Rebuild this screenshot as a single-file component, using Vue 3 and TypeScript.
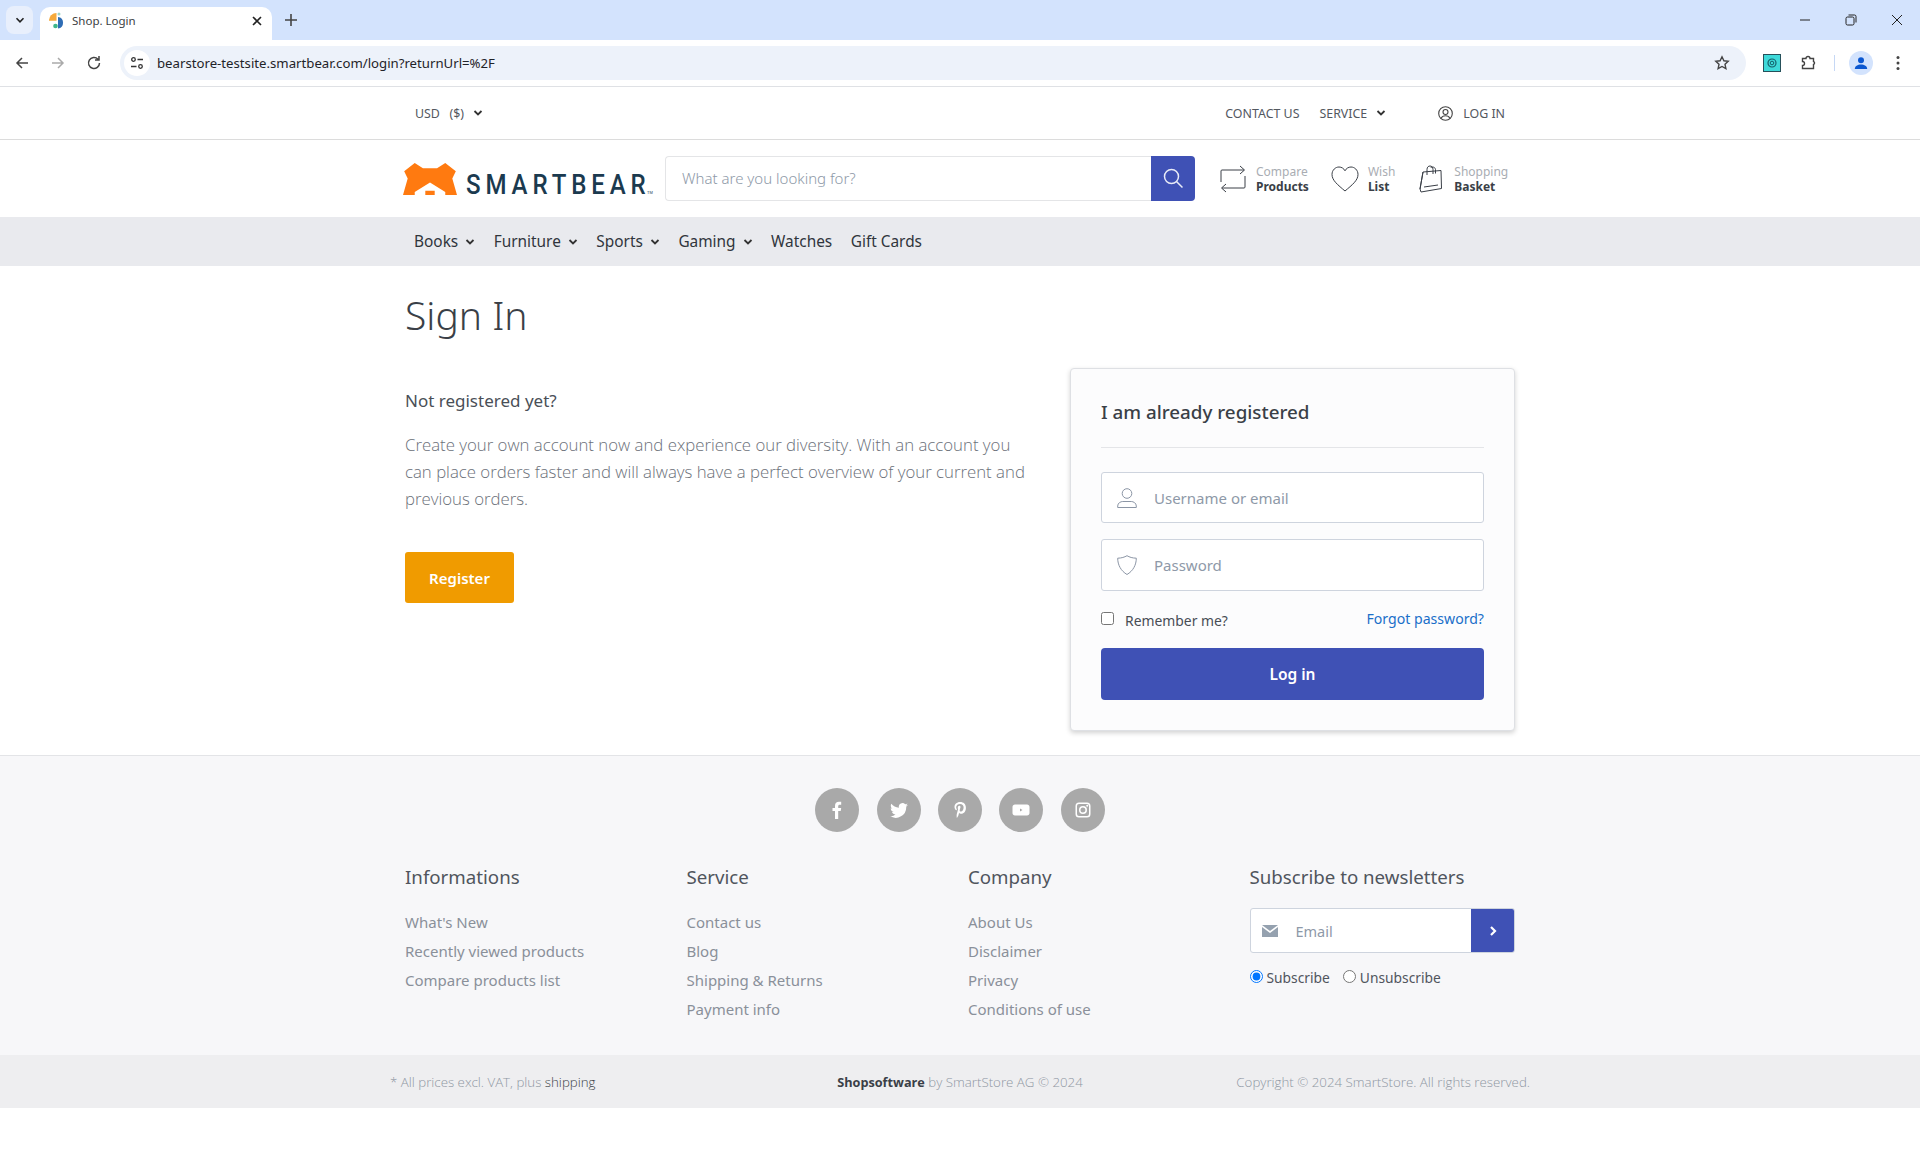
<template>
  <div class="page">
    <div class="tabstrip">
      <div class="tab-menu"><svg width="12" height="12" viewBox="0 0 12 12"><path d="M2.500 4.200 6 7.800l3.500-3.600" fill="none" stroke="#222" stroke-width="1.600"/></svg></div>
      <div class="tab">
        <svg class="favicon" width="16" height="17" viewBox="0 0 16 17">
          <path d="M7.500 1A7.500 7.500 0 0 0 0 8.800h7.500z" fill="#f6a93b"/>
          <path d="M9 5a5.800 5.800 0 0 1 0 11.500z" fill="#2f6db5"/>
          <circle cx="10" cy="2" r="1.500" fill="#9fd3c7"/>
          <circle cx="6.500" cy="14" r="2.300" fill="#3fb68b"/>
        </svg>
        <span class="tab-title">Shop. Login</span>
        <svg class="tab-x" width="12" height="12" viewBox="0 0 12 12"><path d="m2 2 8 8M10 2l-8 8" stroke="#222" stroke-width="1.600"/></svg>
      </div>
      <svg class="tab-plus" width="14" height="14" viewBox="0 0 14 14"><path d="M7 1v12M1 7h12" stroke="#444" stroke-width="1.600"/></svg>
      <div class="win-btns">
        <svg width="12" height="12" viewBox="0 0 12 12"><path d="M1 6h10" stroke="#222" stroke-width="1"/></svg>
        <svg width="12" height="12" viewBox="0 0 12 12"><rect x="1" y="3" width="8" height="8" rx="1.500" fill="none" stroke="#222"/><path d="M3.500 1h6A1.500 1.500 0 0 1 11 2.500v6" fill="none" stroke="#222"/></svg>
        <svg width="12" height="12" viewBox="0 0 12 12"><path d="m1 1 10 10M11 1 1 11" stroke="#222"/></svg>
      </div>
    </div>

    <div class="toolbar">
      <svg width="16" height="16" viewBox="0 0 16 16"><path d="M14 8H3M8 3 3 8l5 5" fill="none" stroke="#444" stroke-width="1.500"/></svg>
      <svg width="16" height="16" viewBox="0 0 16 16"><path d="M2 8h11M8 3l5 5-5 5" fill="none" stroke="#aaa" stroke-width="1.500"/></svg>
      <svg width="16" height="16" viewBox="0 0 16 16"><path d="M13.500 8A5.500 5.500 0 1 1 12 4.200M13 1v4H9" fill="none" stroke="#444" stroke-width="1.500"/></svg>
      <div class="omnibox">
        <span class="site-info">
          <svg width="14" height="14" viewBox="0 0 14 14"><circle cx="3.500" cy="3.500" r="1.800" fill="none" stroke="#333" stroke-width="1.300"/><path d="M7.500 3.500H13M1 10.500h5.500" stroke="#333" stroke-width="1.300"/><circle cx="10.500" cy="10.500" r="1.800" fill="none" stroke="#333" stroke-width="1.300"/></svg>
        </span>
        <span class="url">bearstore-testsite.smartbear.com/login?returnUrl=%2F</span>
        <svg class="star" width="16" height="16" viewBox="0 0 16 16"><path d="m8 1.800 1.900 4 4.300.5-3.200 3 .9 4.300L8 11.500l-3.900 2.100.9-4.300-3.200-3 4.300-.5z" fill="none" stroke="#444" stroke-width="1.400"/></svg>
      </div>
      <div class="ext-icon"><svg width="10" height="10" viewBox="0 0 10 10"><circle cx="5" cy="5" r="4" fill="none" stroke="#14606a" stroke-width="1.200"/><circle cx="5" cy="5" r="1.800" fill="none" stroke="#14606a"/></svg></div>
      <svg class="puzzle" width="16" height="16" viewBox="0 0 16 16"><path d="M1.500 3.500h3.500a2 2 0 0 1 4 0h3.500v3a1.600 1.600 0 0 1 0 3v4h-11V10.500a1.600 1.600 0 0 0 0-4z" fill="none" stroke="#444" stroke-width="1.400"/></svg>
      <span class="tb-sep"></span>
      <span class="avatar"><svg width="14" height="14" viewBox="0 0 14 14"><circle cx="7" cy="4.300" r="3" fill="#0b57d0"/><path d="M0.800 13c0-3 2.800-4.500 6.200-4.500s6.200 1.500 6.200 4.500z" fill="#0b57d0"/></svg></span>
      <svg class="dots" width="4" height="16" viewBox="0 0 4 16"><circle cx="2" cy="2.500" r="1.500" fill="#444"/><circle cx="2" cy="8" r="1.500" fill="#444"/><circle cx="2" cy="13.500" r="1.500" fill="#444"/></svg>
    </div>

    <div class="topbar">
      <div class="container topbar-in">
        <span class="top-link currency">USD&nbsp;&nbsp;&nbsp;($) <svg class="caret" width="10" height="10" viewBox="0 0 10 10"><path d="M1.500 3 5 6.500 8.500 3" fill="none" stroke="#333" stroke-width="1.800"/></svg></span>
        <div class="top-right">
          <span class="top-link">CONTACT US</span>
          <span class="top-link">SERVICE <svg class="caret" width="10" height="10" viewBox="0 0 10 10"><path d="M1.500 3 5 6.500 8.500 3" fill="none" stroke="#333" stroke-width="1.800"/></svg></span>
          <span class="top-link login">
            <svg width="15" height="15" viewBox="0 0 15 15"><circle cx="7.500" cy="7.500" r="6.800" fill="none" stroke="#444" stroke-width="1.100"/><circle cx="7.500" cy="6" r="2.500" fill="none" stroke="#444" stroke-width="1.100"/><path d="M3 12.500c.8-2 2.500-2.700 4.500-2.700s3.700.7 4.500 2.700" fill="none" stroke="#444" stroke-width="1.100"/></svg>
            LOG IN
          </span>
        </div>
      </div>
    </div>

    <header class="header">
      <div class="container header-in">
        <div class="logo">
          <svg width="54" height="32" viewBox="0 0 46 31" preserveAspectRatio="none">
            <path d="M1 8 10 0l7 5h12l7-5 9 8-3 7 4 16H0l4-16z" fill="#ff7a10"/>
            <path d="M10 31v-3l13-9 13 9v3h-9v-4h-8v4z" fill="#fff"/>
          </svg>
          <svg class="logo-word" width="192" height="28" viewBox="0 0 192 28" overflow="visible">
            <text x="0" y="27" transform="scale(.86 1)" textLength="209" lengthAdjust="spacing" class="logo-text">SMARTBEAR</text>
            <text x="181" y="27" class="logo-tm">TM</text>
          </svg>
        </div>
        <div class="search">
          <input class="search-input" placeholder="What are you looking for?" />
          <button class="search-btn" type="button">
            <svg width="22" height="22" viewBox="0 0 22 22"><circle cx="9.500" cy="9.500" r="7" fill="none" stroke="#e8ebf7" stroke-width="1.500"/><path d="m14.500 14.500 6 6" stroke="#e8ebf7" stroke-width="1.500"/></svg>
          </button>
        </div>
        <div class="tools">
          <div class="tool tool-compare">
            <svg width="26" height="28" viewBox="0 0 26 28"><path d="M13 5H2a1 1 0 0 0-1 1v11M20 1l4.500 4-4.500 4M13 5h11M13 23h11a1 1 0 0 0 1-1V11M6 19l-4.500 4L6 27M13 23H2" fill="none" stroke="#3a3f47" stroke-width="1"/></svg>
            <div class="tool-text"><span>Compare</span><b>Products</b></div>
          </div>
          <div class="tool tool-wish">
            <svg width="28" height="26" viewBox="0 0 28 26"><path d="M14 25C7 19 1 14.500 1 8.500 1 4 4.500 1 8 1c2.500 0 4.800 1.400 6 3.800C15.200 2.400 17.500 1 20 1c3.500 0 7 3 7 7.500 0 6-6 10.500-13 16.500z" fill="none" stroke="#3a3f47" stroke-width="1"/></svg>
            <div class="tool-text"><span>Wish</span><b>List</b></div>
          </div>
          <div class="tool tool-bag">
            <svg width="23" height="28" viewBox="0 0 23 28"><path d="M4 7 22 5.500l.500 18L2 27 1 24zM4 7l-3 17M8 10V4.500C8 2 9.500 1 11 1s3 1 3 3.500V9M11.500 3c1-1.500 4.500-1.500 5 1.500V8.500M5 22l14-2" fill="none" stroke="#3a3f47" stroke-width="1"/></svg>
            <div class="tool-text"><span>Shopping</span><b>Basket</b></div>
          </div>
        </div>
      </div>
    </header>

    <nav class="catnav">
      <div class="container catnav-in">
        <span v-for="item in navItems" :key="item.label" class="cat">
          {{ item.label }}
          <svg v-if="item.menu" class="caret" width="10" height="10" viewBox="0 0 10 10"><path d="M1.500 3 5 6.500 8.500 3" fill="none" stroke="#333" stroke-width="1.800"/></svg>
        </span>
      </div>
    </nav>

    <main class="main">
      <div class="container">
        <h1 class="title">Sign In</h1>
        <div class="signin-row">
          <section class="register">
            <h2 class="reg-head">Not registered yet?</h2>
            <p class="reg-text">Create your own account now and experience our diversity. With an account you can place orders faster and will always have a perfect overview of your current and previous orders.</p>
            <button class="reg-btn" type="button">Register</button>
          </section>
          <section class="card">
            <h2 class="card-title">I am already registered</h2>
            <div class="field">
              <svg width="20" height="20" viewBox="0 0 20 20"><circle cx="10" cy="5.500" r="4.800" fill="none" stroke="#8b95a5"/><path d="M.7 19.500v-1.500c0-3 3-4.500 5-4.500h8.600c2 0 5 1.500 5 4.500v1.500z" fill="none" stroke="#8b95a5"/></svg>
              <input placeholder="Username or email" />
            </div>
            <div class="field field-pass">
              <svg width="20" height="20" viewBox="0 0 20 20"><path d="M10 .7c2.500 1.500 5.500 2.400 9.300 2.500C19.300 10 16 16 10 19.500 4 16 .7 10 .7 3.200 4.500 3.100 7.500 2.200 10 .7z" fill="none" stroke="#8b95a5"/></svg>
              <input placeholder="Password" />
            </div>
            <div class="remember-row">
              <label class="remember"><input type="checkbox" /><span>Remember me?</span></label>
              <a class="forgot">Forgot password?</a>
            </div>
            <button class="login-btn" type="button">Log in</button>
          </section>
        </div>
      </div>
    </main>

    <footer class="footer">
      <div class="socials">
        <span v-for="s in socials" :key="s.name" class="social">
          <svg width="18" height="18" viewBox="0 0 18 18"><path :d="s.path" :fill-rule="s.rule" fill="#fff"/></svg>
        </span>
      </div>
      <div class="container footer-cols">
        <div v-for="col in columns" :key="col.title" class="fcol">
          <h3 class="fhead">{{ col.title }}</h3>
          <a v-for="l in col.links" :key="l" class="flink">{{ l }}</a>
        </div>
        <div class="fcol">
          <h3 class="fhead">Subscribe to newsletters</h3>
          <div class="news">
            <span class="news-ico"><svg width="16" height="12" viewBox="0 0 16 12"><path d="M0 0h16L8 6z" fill="#95a1af"/><path d="M0 2l8 6 8-6v10H0z" fill="#95a1af"/></svg></span>
            <input placeholder="Email" />
            <button type="button"><svg width="10" height="12" viewBox="0 0 10 12"><path d="m3 2 4 4-4 4" fill="none" stroke="#fff" stroke-width="2.200"/></svg></button>
          </div>
          <div class="radios">
            <label><input type="radio" name="nl" checked />Subscribe</label>
            <label><input type="radio" name="nl" />Unsubscribe</label>
          </div>
        </div>
      </div>
      <div class="legal">
        <div class="legal-in">
          <span>* All prices excl. VAT, plus <a>shipping</a></span>
          <span class="legal-mid"><b>Shopsoftware</b> by SmartStore AG © 2024</span>
          <span class="legal-end">Copyright © 2024 SmartStore. All rights reserved.</span>
        </div>
      </div>
    </footer>
  </div>
</template>

<script setup lang="ts">
const navItems = [
  { label: 'Books', menu: true },
  { label: 'Furniture', menu: true },
  { label: 'Sports', menu: true },
  { label: 'Gaming', menu: true },
  { label: 'Watches', menu: false },
  { label: 'Gift Cards', menu: false }
]

const socials = [
  { name: 'facebook', rule: 'nonzero', path: 'M7 18V10H4.500V7H7V5c0-2.800 1.500-4.200 4-4.200h2.200v2.900h-1.500c-1.100 0-1.500.6-1.500 1.500V7h3l-.5 3h-2.500v8z' },
  { name: 'twitter', rule: 'nonzero', path: 'M18 3.800c-.7.300-1.400.5-2.100.6.800-.5 1.300-1.200 1.600-2-.7.400-1.500.7-2.300.9a3.700 3.700 0 0 0-6.300 3.400C5.800 6.500 3.100 5 1.300 2.800c-1 1.700-.5 3.800 1.100 4.900-.6 0-1.200-.2-1.700-.5 0 1.800 1.300 3.300 3 3.700-.5.100-1.100.2-1.700.1.500 1.500 1.900 2.500 3.500 2.600A7.500 7.500 0 0 1 0 15.100 10.500 10.500 0 0 0 16.200 5.700c.7-.5 1.300-1.200 1.800-1.900z' },
  { name: 'pinterest', rule: 'evenodd', path: 'M9.200 1C5.500 1 3.500 3.400 3.500 6c0 1.300.7 2.800 1.800 3.300.3.100.3 0 .5-.9 0-.2 0-.3-.1-.4-1.100-1.600-.5-5 3.300-5 2.400 0 3.600 1.500 3.600 3.300 0 2.400-1.100 4.300-2.600 4.300-.9 0-1.500-.7-1.300-1.600.3-1 .8-2.200.8-2.900 0-.7-.4-1.300-1.100-1.300-.9 0-1.600.9-1.600 2.200 0 .8.300 1.300.3 1.300L5.800 13c-.3 1.300 0 3.200 0 3.800 0 .1.200.1.200 0 .2-.3 1.200-1.500 1.500-2.800l.6-2.300c.3.600 1.200 1.100 2.100 1.100 2.800 0 4.700-2.500 4.700-5.800C15 3 12.500 1 9.200 1z' },
  { name: 'youtube', rule: 'evenodd', path: 'M3 3.500h12c1.500 0 2.500 1 2.500 2.500v6c0 1.500-1 2.500-2.500 2.500H3C1.500 14.500.5 13.500.5 12V6C.5 4.500 1.500 3.500 3 3.500zM8 7.500V10.500L10.500 9z' },
  { name: 'instagram', rule: 'evenodd', path: 'M5 1.500h8A3.500 3.500 0 0 1 16.500 5v8a3.500 3.500 0 0 1-3.500 3.500H5A3.500 3.500 0 0 1 1.500 13V5A3.500 3.500 0 0 1 5 1.500zM5 3a2 2 0 0 0-2 2v8a2 2 0 0 0 2 2h8a2 2 0 0 0 2-2V5a2 2 0 0 0-2-2zM9 5a4 4 0 1 1 0 8 4 4 0 0 1 0-8zM9 6.500a2.500 2.500 0 1 0 0 5 2.500 2.500 0 0 0 0-5zM13.200 3.800a1 1 0 1 1 0 2 1 1 0 0 1 0-2z' }
]

const columns = [
  { title: 'Informations', links: ["What's New", 'Recently viewed products', 'Compare products list'] },
  { title: 'Service', links: ['Contact us', 'Blog', 'Shipping & Returns', 'Payment info'] },
  { title: 'Company', links: ['About Us', 'Disclaimer', 'Privacy', 'Conditions of use'] }
]
</script>

<style>
html, body {
  margin: 0;
  background: #fff;
}
</style>

<style scoped>
.page {
  width: 1920px;
  height: 1152px;
  overflow: hidden;
  font-family: "Noto Sans", "Open Sans", sans-serif;
  color: #3a3f47;
  background: #fff;
}

.container {
  width: 1110px;
  margin: 0 auto;
}

svg {
  display: block;
  flex: none;
}

.caret {
  display: inline-block;
}

/* browser chrome */
.tabstrip {
  height: 40px;
  background: #d3e3fd;
  display: flex;
  align-items: flex-end;
  position: relative;
}

.tab-menu {
  width: 27px;
  height: 28px;
  margin: 0 0 6px 6px;
  border-radius: 8px;
  background: #e8effc;
  display: flex;
  align-items: center;
  justify-content: center;
}

.tab {
  width: 232px;
  height: 33px;
  margin-left: 7px;
  padding: 0 9px 6px 9px;
  box-sizing: border-box;
  background: #fff;
  border-radius: 10px 10px 0 0;
  display: flex;
  align-items: center;
  gap: 7px;
  font-size: 11.500px;
  color: #3c4043;
}

.tab-title {
  flex: 1;
}

.tab-plus {
  margin: 0 0 13px 12px;
}

.win-btns {
  margin-left: auto;
  margin-bottom: 14px;
  padding-right: 17px;
  display: flex;
  gap: 34px;
}

.toolbar {
  height: 46px;
  background: #fff;
  border-bottom: 1px solid #dfe1e5;
  border-radius: 10px 10px 0 0;
  display: flex;
  align-items: center;
  padding: 0 14px;
}

.toolbar > svg:nth-child(2),
.toolbar > svg:nth-child(3) {
  margin-left: 20px;
}

.omnibox {
  margin-left: 18px;
  flex: 1;
  height: 34px;
  border-radius: 17px;
  background: #edf2fa;
  display: flex;
  align-items: center;
  padding: 0 16px 0 4px;
}

.site-info {
  width: 26px;
  height: 26px;
  border-radius: 50%;
  background: #fff;
  display: flex;
  align-items: center;
  justify-content: center;
}

.url {
  margin-left: 7px;
  font-size: 13.200px;
  color: #1f2328;
  flex: 1;
}

.ext-icon {
  width: 16px;
  height: 16px;
  margin-left: 17px;
  border: 1px solid #26505a;
  background: #3ed9d9;
  display: flex;
  align-items: center;
  justify-content: center;
}

.puzzle {
  margin-left: 20px;
}

.tb-sep {
  width: 1px;
  height: 16px;
  margin-left: 17px;
  background: #c6d8f5;
}

.avatar {
  width: 24px;
  height: 24px;
  margin-left: 14px;
  border-radius: 50%;
  background: #d3e3fd;
  display: flex;
  align-items: center;
  justify-content: center;
}

.dots {
  margin-left: 23px;
  margin-right: 6px;
}

/* store header */
.topbar {
  height: 52px;
  border-bottom: 1px solid #dcdcdc;
}

.topbar-in {
  height: 100%;
  display: flex;
  align-items: center;
  justify-content: space-between;
  padding: 0 10px;
  box-sizing: border-box;
}

.top-right {
  display: flex;
  align-items: center;
  gap: 20px;
}

.top-link {
  display: inline-flex;
  align-items: center;
  gap: 9px;
  font-size: 12.400px;
  color: #53585f;
}

.login {
  margin-left: 32px;
  gap: 10px;
}

.header-in {
  height: 77px;
  display: flex;
  align-items: center;
}

.logo {
  width: 262px;
  flex: none;
  margin-left: -2px;
  display: flex;
  align-items: flex-end;
  gap: 9px;
  height: 32px;
}

.logo-text {
  font-family: Roboto, sans-serif;
  font-size: 28px;
  font-weight: 500;
  fill: #1b3a4f;
}

.logo-tm {
  font-family: "Liberation Sans", sans-serif;
  font-size: 4px;
  fill: #1b3a4f;
}

.search {
  flex: none;
  width: 530px;
  height: 45px;
  margin-top: -1px;
  display: flex;
}

.search-input {
  flex: 1;
  min-width: 0;
  border: 1px solid #e4e5e7;
  border-right: none;
  border-radius: 4px 0 0 4px;
  padding: 0 16px;
  font: 300 15px "Noto Sans", sans-serif;
  outline: none;
}

input::placeholder {
  color: #8e99a8;
  opacity: 1;
}

.search-btn {
  width: 44px;
  border: none;
  border-radius: 0 4px 4px 0;
  background: #3f51b5;
  display: flex;
  align-items: center;
  justify-content: center;
  padding: 0;
}

.tools {
  margin-left: 25px;
  display: flex;
}

.tool {
  display: flex;
  align-items: center;
  gap: 10px;
}

.tool-wish {
  margin-left: 22px;
  gap: 9px;
}

.tool-bag {
  margin-left: 24px;
  gap: 12px;
}

.tool-text {
  display: flex;
  flex-direction: column;
  font-size: 12px;
  line-height: 15px;
}

.tool-text span {
  color: #a9adb3;
}

.tool-text b {
  font-weight: 700;
  color: #3a3f47;
}

.catnav {
  height: 49px;
  background: #e9eaee;
}

.catnav-in {
  height: 100%;
  display: flex;
  align-items: center;
  gap: 18.500px;
  padding: 0 0 0 9px;
  box-sizing: border-box;
}

.cat {
  display: inline-flex;
  align-items: center;
  gap: 7px;
  font-size: 15.400px;
  color: #30353c;
}

/* sign in */
.main {
  height: 489px;
  box-sizing: border-box;
}

.title {
  margin: 0;
  padding-top: 23px;
  font: 300 39px/52px "Noto Sans", sans-serif;
  color: #3a3f47;
}

.signin-row {
  display: flex;
  justify-content: space-between;
  margin-top: 27px;
}

.register {
  width: 625px;
  padding-top: 19px;
}

.reg-head {
  margin: 0;
  font-size: 17px;
  line-height: 28px;
  font-weight: 400;
  color: #4a4f57;
}

.reg-text {
  margin: 16px 0 0;
  font: 300 16.800px/27px "Open Sans", sans-serif;
  color: #6b7079;
}

.reg-btn {
  margin-top: 40px;
  width: 109px;
  height: 51px;
  border: none;
  border-radius: 3px;
  background: #f09b00;
  color: #fff;
  font: 600 15px "Noto Sans", sans-serif;
}

.card {
  width: 445px;
  height: 363px;
  box-sizing: border-box;
  padding: 28px 30px 0;
  border: 1px solid #dee0e4;
  border-radius: 4px;
  background: #fcfcfd;
  box-shadow: 0 2px 5px rgba(0, 0, 0, 0.18);
}

.card-title {
  margin: 0;
  padding-bottom: 20px;
  border-bottom: 1px solid #e4e5e8;
  font-size: 18.800px;
  line-height: 30px;
  font-weight: 500;
  color: #3a3f47;
}

.field {
  margin-top: 24px;
  height: 51px;
  box-sizing: border-box;
  border: 1px solid #ced4de;
  border-radius: 3px;
  background: #fff;
  display: flex;
  align-items: center;
  padding-left: 15px;
}

.field-pass {
  margin-top: 16px;
  height: 52px;
}

.field input {
  flex: 1;
  min-width: 0;
  margin-left: 15px;
  border: none;
  outline: none;
  background: none;
  font: 400 15px "Noto Sans", sans-serif;
}

.remember-row {
  height: 57px;
  box-sizing: border-box;
  padding-top: 2px;
  display: flex;
  align-items: center;
  justify-content: space-between;
}

.remember {
  display: flex;
  align-items: center;
  font-size: 13.900px;
  color: #484d55;
}

.remember input {
  width: 13px;
  height: 13px;
  margin: 0 11px 5px 0;
}

.forgot {
  font-size: 14.100px;
  color: #1a6fc9;
  margin-bottom: 5px;
}

.login-btn {
  width: 100%;
  height: 52px;
  border: none;
  border-radius: 4px;
  background: #3f51b5;
  color: #fff;
  font: 600 15.500px "Noto Sans", sans-serif;
}

/* footer */
.footer {
  height: 353px;
  background: #f7f7f9;
  border-top: 1px solid #e3e4e7;
  box-sizing: border-box;
}

.socials {
  display: flex;
  justify-content: center;
  gap: 17.400px;
  padding-top: 32px;
}

.social {
  width: 44px;
  height: 44px;
  border-radius: 50%;
  background: #a9a9a9;
  display: flex;
  align-items: center;
  justify-content: center;
}

.footer-cols {
  margin-top: 31px;
  height: 192px;
  display: grid;
  grid-template-columns: repeat(4, 281.500px);
}

.fhead {
  margin: 0 0 17px;
  font-size: 18.700px;
  line-height: 28px;
  font-weight: 400;
  color: #50555d;
}

.flink {
  display: block;
  font-size: 15px;
  line-height: 29px;
  color: #8a909a;
}

.news {
  width: 265px;
  height: 45px;
  box-sizing: border-box;
  display: flex;
  border: 1px solid #ced4de;
  border-radius: 3px;
  background: #fff;
  overflow: hidden;
}

.news-ico {
  width: 43px;
  display: flex;
  align-items: center;
  justify-content: center;
  padding-right: 4px;
  box-sizing: border-box;
}

.news input {
  flex: 1;
  min-width: 0;
  border: none;
  outline: none;
  font: 400 14.500px "Noto Sans", sans-serif;
}

.news button {
  width: 44px;
  margin: -1px;
  border: none;
  background: #3f51b5;
  display: flex;
  align-items: center;
  justify-content: center;
  padding: 0;
}

.radios {
  display: flex;
  gap: 13px;
  margin-top: 15px;
  font-size: 13.800px;
  color: #50555d;
}

.radios label {
  display: flex;
  align-items: center;
  gap: 4px;
}

.radios input {
  width: 13px;
  height: 13px;
  margin: 0 0 3px;
}

.legal {
  height: 53px;
  background: #eeeef0;
}

.legal-in {
  width: 1140px;
  height: 100%;
  margin: 0 auto;
  display: flex;
  align-items: center;
  font: 300 13.300px "Open Sans", sans-serif;
  color: #8f97a3;
}

.legal-in > span {
  flex: 1;
}

.legal-mid {
  text-align: center;
}

.legal-end {
  text-align: right;
  white-space: nowrap;
}

.legal-in a {
  color: #3a3f47;
}

.legal-in b {
  font-size: 12.700px;
  font-weight: 700;
  color: #3a3f47;
}
</style>
